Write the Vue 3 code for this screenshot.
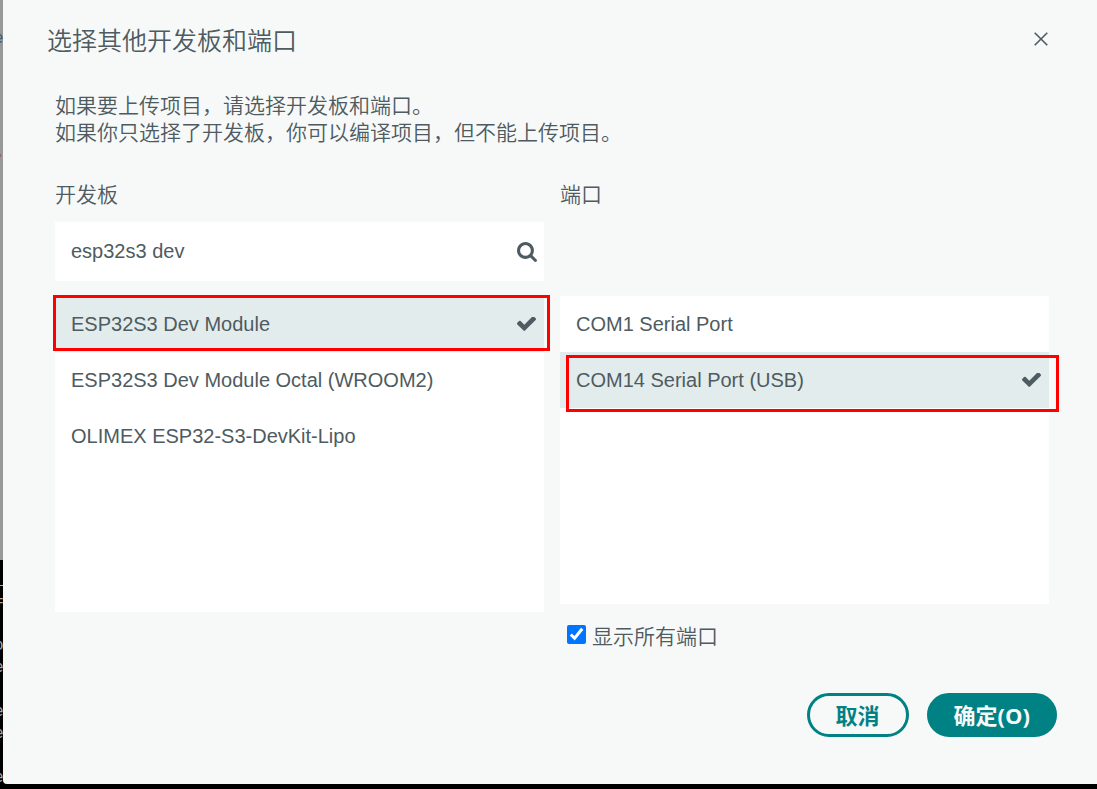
<script setup>
import { ref } from 'vue'

const query = ref('esp32s3 dev')
const showAll = ref(true)
const boards = ['ESP32S3 Dev Module', 'ESP32S3 Dev Module Octal (WROOM2)', 'OLIMEX ESP32-S3-DevKit-Lipo']
const ports = ['COM1 Serial Port', 'COM14 Serial Port (USB)']
const board = ref(boards[0])
const port = ref(ports[1])
</script>

<template>
  <div class="screen">
    <div class="backdrop" aria-hidden="true">
      <div class="editor"><span class="code">e</span><span class="code string">,</span></div>
      <div class="terminal">
        <span>_</span><span>=</span><span class="blank"></span><span>o</span><span>e</span><span class="blank"></span><span>e</span><span>e</span><span class="blank"></span><span>e</span>
      </div>
    </div>

    <main class="dialog" role="dialog" aria-labelledby="dialog-title">
      <header class="head">
        <h1 id="dialog-title">选择其他开发板和端口</h1>
        <button class="close" type="button" aria-label="关闭">
          <svg width="14" height="14" viewBox="0 0 14 14"><path d="M.7.7 13.3 13.3M13.3.7.7 13.3" /></svg>
        </button>
      </header>

      <div class="content">
        <p class="intro">如果要上传项目，请选择开发板和端口。<br />如果你只选择了开发板，你可以编译项目，但不能上传项目。</p>

        <div class="columns">
          <section class="column">
            <label class="caption" for="board-search">开发板</label>
            <div class="search">
              <input id="board-search" v-model="query" type="text" />
              <svg class="glass" viewBox="64 128 1664 1664"><path d="M1216 832q0-185-131.5-316.5t-316.5-131.5-316.5 131.5-131.5 316.5 131.5 316.5 316.5 131.5 316.5-131.5 131.5-316.5zm512 832q0 52-38 90t-90 38q-54 0-90-38l-343-342q-179 124-399 124-143 0-273.5-55.5t-225-150-150-225-55.5-273.5 55.5-273.5 150-225 225-150 273.5-55.5 273.5 55.5 225 150 150 225 55.5 273.5q0 220-124 399l343 343q37 37 37 90z" /></svg>
            </div>
            <div class="list boards">
              <div v-for="name in boards" :key="name" class="slot">
                <button type="button" class="row" :class="{ selected: name === board }" @click="board = name">
                  <span>{{ name }}</span>
                  <svg v-if="name === board" class="tick" viewBox="121 402 1550 1120"><path d="M1671 566q0 40-28 68l-724 724-136 136q-28 28-68 28t-68-28l-136-136-362-362q-28-28-28-68t28-68l136-136q28-28 68-28t68 28l294 295 656-657q28-28 68-28t68 28l136 136q28 28 28 68z" /></svg>
                </button>
                <span v-if="name === board" class="mark mark-board"></span>
              </div>
            </div>
          </section>

          <section class="column">
            <h2 class="caption">端口</h2>
            <div class="spacer"></div>
            <div class="list ports">
              <div v-for="name in ports" :key="name" class="slot">
                <button type="button" class="row" :class="{ selected: name === port }" @click="port = name">
                  <span>{{ name }}</span>
                  <svg v-if="name === port" class="tick" viewBox="121 402 1550 1120"><path d="M1671 566q0 40-28 68l-724 724-136 136q-28 28-68 28t-68-28l-136-136-362-362q-28-28-28-68t28-68l136-136q28-28 68-28t68 28l294 295 656-657q28-28 68-28t68 28l136 136q28 28 28 68z" /></svg>
                </button>
                <span v-if="name === port" class="mark mark-port"></span>
              </div>
            </div>
            <label class="show-all"><input v-model="showAll" type="checkbox" /><span>显示所有端口</span></label>
          </section>
        </div>
      </div>

      <footer class="actions">
        <button class="btn" type="button">取消</button>
        <button class="btn primary" type="button">确定(O)</button>
      </footer>
    </main>
  </div>
</template>

<style>
body {
  margin: 0;
  background: #000;
}
</style>

<style scoped>
* {
  box-sizing: border-box;
}

.screen {
  position: relative;
  display: flex;
  min-height: 100vh;
  padding: 0 0 5px 3px;
  overflow: hidden;
  color: #4e5b61;
  font-family: "Liberation Sans", "Noto Sans CJK SC", sans-serif;
  font-size: 20px;
}

.backdrop {
  position: absolute;
  inset: 0;
  display: flex;
  flex-direction: column;
  font: 16px/22px "Liberation Mono", monospace;
}

.editor {
  display: flex;
  flex-direction: column;
  gap: 92px;
  height: 560px;
  padding-top: 28px;
  background: #979999;
}

.code {
  margin-left: -6px;
  color: #3f6068;
}

.string {
  margin-left: -4px;
  color: #a0522d;
}

.terminal {
  display: flex;
  flex-direction: column;
  padding-top: 9px;
  color: #a8a8a8;
}

.terminal span {
  height: 22px;
  margin-left: -6px;
}

.dialog {
  position: relative;
  display: flex;
  flex: 1;
  flex-direction: column;
  min-width: 0;
  background: #f7f9f9;
  border-radius: 0 0 0 4px;
}

.head {
  display: flex;
  align-items: flex-start;
  justify-content: space-between;
  padding: 23px 49px 0 44px;
}

h1 {
  margin: 0;
  font-size: 25px;
  font-weight: 350;
  line-height: 36px;
}

button {
  padding: 0;
  color: inherit;
  font: inherit;
  background: none;
  border: 0;
  cursor: pointer;
}

.close {
  display: flex;
  padding-top: 9px;
}

.close path {
  fill: none;
  stroke: #4e5b61;
  stroke-width: 1.6;
}

.content {
  padding: 33px 48px 0 52px;
}

.intro {
  margin: 0;
  font-size: 21px;
  font-weight: 350;
  line-height: 27px;
}

.columns {
  display: grid;
  grid-template-columns: 1fr 1fr;
  gap: 16px;
  padding-top: 35px;
}

.column {
  min-width: 0;
}

.caption {
  display: block;
  margin: 0;
  font-size: 21px;
  font-weight: 350;
  line-height: 28px;
}

.search,
.spacer {
  height: 59px;
  margin: 13px 0 15px;
}

.search {
  display: flex;
  align-items: center;
  padding: 0 7px 0 16px;
  background: #fff;
}

.search input {
  flex: 1;
  min-width: 0;
  padding: 0;
  color: inherit;
  font: inherit;
  background: none;
  border: 0;
  outline: 0;
}

.glass {
  width: 20px;
  height: 20px;
  fill: #4e5b61;
}

.list {
  background: #fff;
}

.boards {
  min-height: 316px;
}

.ports {
  min-height: 308px;
}

.slot {
  position: relative;
}

.row {
  display: flex;
  align-items: center;
  justify-content: space-between;
  width: 100%;
  height: 56px;
  padding: 0 8px 0 16px;
  text-align: left;
}

.selected {
  background: #e3ecec;
}

.tick {
  width: 19px;
  height: 14px;
  fill: #4e5b61;
}

.mark {
  position: absolute;
  border: 3px solid #f00;
  pointer-events: none;
}

.mark-board {
  inset: -1px -6px 1px -2px;
}

.mark-port {
  inset: 3px -10px -4px 6px;
}

.show-all {
  display: flex;
  gap: 6px;
  align-items: center;
  width: max-content;
  margin: 19px 0 0 7px;
  font-size: 21px;
  font-weight: 350;
  line-height: 28px;
}

.show-all input {
  width: 19px;
  height: 19px;
  margin: 0 0 6px;
  accent-color: #0075ff;
}

.actions {
  display: flex;
  gap: 18px;
  justify-content: flex-end;
  padding: 42px 40px 47px;
}

.btn {
  height: 44px;
  padding: 0 26px;
  color: #008184;
  font-family: "Open Sans", "Noto Sans CJK SC", sans-serif;
  font-size: 22px;
  font-weight: 700;
  line-height: 38px;
  border: 3px solid #008184;
  border-radius: 22px;
}

.primary {
  padding: 0 24px;
  color: #f7f9f9;
  background: #008184;
}
</style>
